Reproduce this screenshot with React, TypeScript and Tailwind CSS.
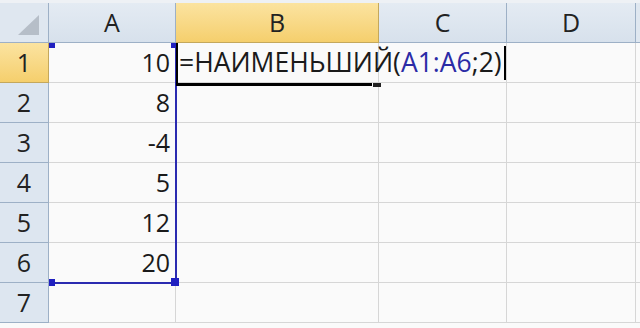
import React from "react";

const cols = ["A", "B", "C", "D"];
const values: Record<number, string> = { 1: "10", 2: "8", 3: "-4", 4: "5", 5: "12", 6: "20" };

const font = { fontFamily: '"Open Sans", "Noto Sans", sans-serif' };

const headCell = "flex items-center justify-center border-r border-b text-[25px] text-[#222]";
const plainHead = "border-[#9db0c6] bg-gradient-to-b from-[#e4ebf3] to-[#d7e1ec]";
const activeHead = "border-[#c4a85c] bg-gradient-to-b from-[#fbe3a0] to-[#f5cf6c]";

export default function App() {
  return (
    <div className="relative h-[328px] w-[640px] overflow-hidden bg-[#fafafa]" style={font}>
      <div className="h-[3px] bg-[#eef1f5]" />
      <div className="grid grid-cols-[49px_127px_203px_128px_129px_4px] grid-rows-[40px_repeat(7,40px)]">
        {/* corner */}
        <div className="flex items-end justify-end border-r border-b border-[#9db0c6] bg-[#dfe7f0] pr-[9px] pb-[7px]">
          <svg width="21" height="20" viewBox="0 0 21 20">
            <polygon points="21,0 21,20 0,20" fill="#b6bec8" />
          </svg>
        </div>
        {cols.map((c) => (
          <div key={c} className={`${headCell} ${c === "B" ? activeHead : plainHead}`}>
            {c}
          </div>
        ))}
        <div className="border-b border-[#9db0c6] bg-[#dfe7f0]" />

        {[1, 2, 3, 4, 5, 6, 7].map((r) => (
          <React.Fragment key={r}>
            <div className={`${headCell} ${r === 1 ? activeHead : "border-[#9db0c6] bg-[#dde6f0]"}`}>{r}</div>
            <div className="flex items-center justify-end border-r border-b border-[#d6d6d6] pr-[5px] text-[25px] text-[#1a1a1a]">
              {values[r] ?? ""}
            </div>
            <div className="relative border-r border-b border-[#d6d6d6]">
              {r === 1 && (
                <div className="absolute left-[3px] top-0 flex h-full items-center whitespace-nowrap text-[26.5px] text-[#1a1a1a]">
                  <span>=НАИМЕНЬШИЙ(</span>
                  <span className="text-[#2b2ba6]">A1:A6</span>
                  <span>;2)</span>
                  <span className="ml-[2px] h-[34px] w-[2px] bg-black" />
                </div>
              )}
            </div>
            <div className="border-r border-b border-[#d6d6d6]" />
            <div className="border-r border-b border-[#d6d6d6]" />
            <div className="border-b border-[#d6d6d6]" />
          </React.Fragment>
        ))}
      </div>

      {/* range selection A1:A6 */}
      <div className="absolute left-[49px] top-[43px] h-[241px] w-[128px] border-r-2 border-b-2 border-[#2a2ab0]">
        <div className="flex h-full flex-col justify-between">
          <div className="flex justify-between">
            <span className="h-[5px] w-[6px] bg-[#2020c0]" />
            <span className="mr-[-1px] h-[5px] w-[5px] bg-[#2020c0]" />
          </div>
          <div className="mb-[-4px] flex items-end justify-between">
            <span className="h-[7px] w-[6px] bg-[#2020c0]" />
            <span className="mr-[-4px] h-[8px] w-[8px] bg-[#2020c0]" />
          </div>
        </div>
      </div>

      {/* active cell B1 */}
      <div className="absolute left-[176px] top-[43px] h-[43px] w-[196px] border-l-2 border-b-[3px] border-black">
        <span className="absolute -right-[9px] -bottom-[4px] h-[4px] w-[8px] bg-[#222]" />
      </div>
    </div>
  );
}
